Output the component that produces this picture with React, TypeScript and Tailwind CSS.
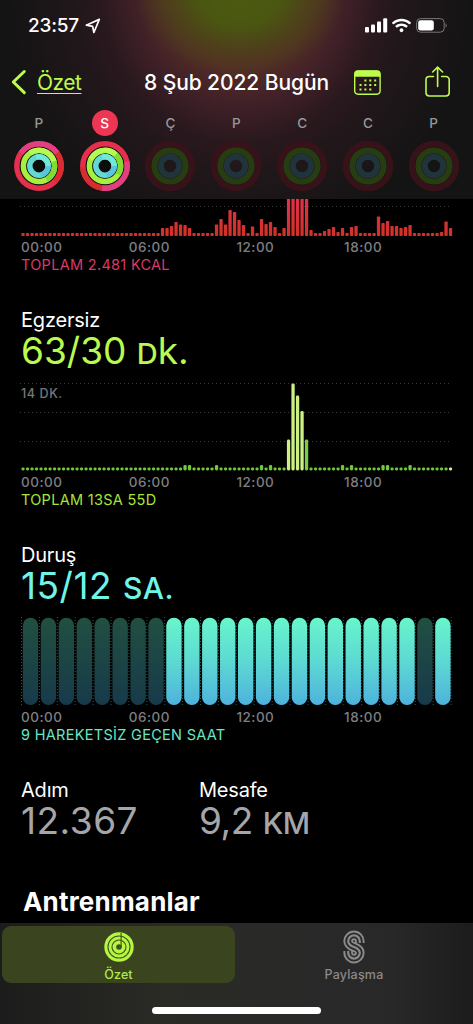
import { FaWifi } from "react-icons/fa";

const BAR_PITCH = 4.5;

// 15 minute buckets, heights in px
const ENERGY = [
  ...Array(31).fill(3),
  8, 8, 10, 14, 11.5, 11, 8, 3, 3, 3, 3, 3, 11.5, 17, 11.5, 26, 24, 16, 11, 3,
  9.5, 3, 17, 12, 14, 9, 3, 8, 42, 42, 42, 42, 42, 6, 3, 3, 5, 7, 9, 4, 8, 3, 9,
  10, 3, 3, 3, 3, 19.5, 13, 15, 10, 10, 8, 9, 11, 3, 3, 3, 3, 3, 3, 4, 14.5, 8,
];

const EXERCISE: Record<number, number> = {
  36: 5.5, 37: 5.5, 43: 5.5, 53: 5.5, 55: 5.5, 59: 31, 60: 87, 61: 75, 62: 59.5,
  63: 31, 71: 5.5, 73: 5.5, 80: 5.5, 81: 5.5, 86: 5.5,
};

const HOURS = ["00:00", "06:00", "12:00", "18:00"];

const DAYS = [
  { label: "P", rings: [0.15, 0.2, 0.25] },
  { label: "S", selected: true, rings: [0.52, 0.12, 0.25] },
  { label: "Ç" },
  { label: "P" },
  { label: "C" },
  { label: "C" },
  { label: "P" },
];

function Grid({ y }: { y: number }) {
  return (
    <line
      x1="20"
      x2="452"
      y1={y}
      y2={y}
      stroke="#383838"
      strokeWidth="1"
      strokeDasharray="1 3"
    />
  );
}

function HourLabels() {
  return (
    <div className="flex h-[17px] pl-[21px] text-[13.5px] font-medium leading-[17px] tracking-[0.5px] text-[#7e7e82]">
      {HOURS.map((h) => (
        <div key={h} className="w-[107.7px]">
          {h}
        </div>
      ))}
    </div>
  );
}

function EnergyChart() {
  return (
    <svg width="473" height="37" viewBox="0 0 473 37" className="block">
      <defs>
        <linearGradient id="move" gradientUnits="userSpaceOnUse" x1="0" y1="-20" x2="0" y2="37">
          <stop offset="0" stopColor="#e8335f" />
          <stop offset="1" stopColor="#d13127" />
        </linearGradient>
      </defs>
      <Grid y={7.5} />
      {ENERGY.map((h, i) => (
        <rect
          key={i}
          x={21.4 + i * BAR_PITCH}
          y={37 - h}
          width="3.3"
          height={h}
          rx="0.8"
          fill="url(#move)"
        />
      ))}
    </svg>
  );
}

function exerciseColor(i: number) {
  if (i === 95) return "#d9f58c";
  if (i >= 59 && i <= 62) return "#cdf084";
  if (i === 63) return "#77cf45";
  return "#72c83c";
}

function ExerciseChart() {
  return (
    <svg width="473" height="90" viewBox="0 0 473 90" className="block">
      <Grid y={2.5} />
      <Grid y={31.5} />
      <Grid y={60.5} />
      {Array.from({ length: 96 }, (_, i) => {
        const h = EXERCISE[i] ?? 3;
        return (
          <rect
            key={i}
            x={21.4 + i * BAR_PITCH}
            y={89.5 - h}
            width="3.3"
            height={h}
            rx="1.4"
            fill={exerciseColor(i)}
          />
        );
      })}
    </svg>
  );
}

function StandChart() {
  return (
    <svg width="473" height="90" viewBox="0 0 473 90" className="block">
      <defs>
        <linearGradient id="stood" x1="0" y1="0" x2="0" y2="1">
          <stop offset="0" stopColor="#68f5cb" />
          <stop offset="0.5" stopColor="#5dd9d3" />
          <stop offset="1" stopColor="#4eb2dc" />
        </linearGradient>
        <linearGradient id="idle" x1="0" y1="0" x2="0" y2="1">
          <stop offset="0" stopColor="#214f41" />
          <stop offset="1" stopColor="#173a4a" />
        </linearGradient>
      </defs>
      {Array.from({ length: 25 }, (_, i) => (
        <line
          key={i}
          x1={21.5 + i * 17.9}
          x2={21.5 + i * 17.9}
          y1="1"
          y2="89"
          stroke="#245b55"
          strokeWidth="1"
          strokeDasharray="1 2"
        />
      ))}
      {Array.from({ length: 24 }, (_, i) => (
        <rect
          key={i}
          x={22.8 + i * 17.93}
          y="1.8"
          width="15.4"
          height="87.3"
          rx="7.6"
          fill={i < 8 || i === 22 ? "url(#idle)" : "url(#stood)"}
        />
      ))}
    </svg>
  );
}

// point on a ring, t in turns clockwise from the top
function ringPoint(r: number, t: number) {
  const a = t * Math.PI * 2;
  return [26 + r * Math.sin(a), 26 - r * Math.cos(a)];
}

function Rings({ ends }: { ends?: number[] }) {
  if (!ends) {
    return (
      <svg width="52" height="52" viewBox="0 0 52 52">
        <circle cx="26" cy="26" r="22.2" fill="none" stroke="#371319" strokeWidth="6" />
        <circle cx="26" cy="26" r="15.6" fill="none" stroke="#283c12" strokeWidth="6" />
        <circle cx="26" cy="26" r="9.2" fill="none" stroke="#20343c" strokeWidth="6" />
      </svg>
    );
  }
  const radii = [22.2, 15.6, 9.2];
  const base = ["#e4304c", "#a5f03f", "#63d8d4"];
  const tint = ["#e23f83", "#b5fa50", "#71e9d6"];
  const past = ["#d92b30", "#80dc31", "#59c5df"];
  return (
    <svg width="52" height="52" viewBox="0 0 52 52">
      <circle cx="26" cy="26" r="25.2" fill="#0b0d0b" />
      {radii.map((r, i) => {
        const [sx, sy] = ringPoint(r, ends[i] - 0.3);
        const [x, y] = ringPoint(r, ends[i]);
        const [ex, ey] = ringPoint(r, ends[i] + 0.22);
        return (
          <g key={r} fill="none" strokeWidth="5.5">
            <circle cx="26" cy="26" r={r} stroke={base[i]} />
            <path d={`M${x} ${y}A${r} ${r} 0 0 1 ${ex} ${ey}`} stroke={past[i]} />
            <path d={`M${sx} ${sy}A${r} ${r} 0 0 1 ${x} ${y}`} stroke={tint[i]} />
          </g>
        );
      })}
    </svg>
  );
}

function StatusBar() {
  return (
    <div className="flex h-[53px] justify-between pl-[28px] pr-[25px] text-white">
      <div className="flex items-start gap-[6px] pt-[14px]">
        <span className="text-[19px] font-medium leading-6 tracking-[-0.2px]">23:57</span>
        <svg width="16" height="16" viewBox="0 0 16 16" className="mt-[4px]">
          <path
            d="M14.3 1.4 1.3 7.2 7.6 8.4 8.9 14.5Z"
            fill="none"
            stroke="white"
            strokeWidth="1.7"
            strokeLinejoin="round"
          />
        </svg>
      </div>
      <div className="flex items-start pt-[18px]">
        <svg width="23" height="15" viewBox="0 0 23 15" className="mr-[4px]">
          <rect x="0" y="9" width="4" height="5.4" rx="1" fill="white" />
          <rect x="6" y="6.5" width="4" height="7.9" rx="1" fill="white" />
          <rect x="12" y="3.4" width="4" height="11" rx="1" fill="white" />
          <rect x="18.2" y="0.3" width="4" height="14.1" rx="1" fill="white" />
        </svg>
        <FaWifi size={19} className="mt-[-2px]" />
        <svg width="32" height="16" viewBox="0 0 32 16" className="ml-[5px]">
          <rect x="0.6" y="0.6" width="27.6" height="13.6" rx="4" fill="none" stroke="#77777a" strokeWidth="1" />
          <rect x="2.2" y="2.2" width="15.6" height="10.4" rx="2.4" fill="white" />
          <path d="M29.6 5.2c1.4.8 1.4 3.6 0 4.4z" fill="#77777a" />
        </svg>
      </div>
    </div>
  );
}

function NavBar() {
  return (
    <div className="flex h-[57px] items-center">
      <svg width="16" height="26" viewBox="0 0 16 26" className="ml-[11px]">
        <path d="M13.3 2.5 2.3 13l11 10.7" fill="none" stroke="#bdfb4c" strokeWidth="3" strokeLinecap="round" strokeLinejoin="round" />
      </svg>
      <div className="ml-[10px] mt-[2px] w-[107px] text-[21px] leading-7 tracking-[-0.5px] text-[#bdfb4c] underline decoration-1 underline-offset-[3px]">
        Özet
      </div>
      <div className="mt-[2px] w-[210px] whitespace-nowrap text-[21px] font-medium leading-7 tracking-[-0.08px] text-white">
        8 Şub 2022 Bugün
      </div>
      <svg width="27" height="26" viewBox="0 0 27 26" className="mt-[2px]">
        <rect x="0.7" y="1" width="25.4" height="23.2" rx="3.4" fill="none" stroke="#bdfb4c" strokeWidth="1.4" />
        <path d="M.5 6.7V4a3.5 3.5 0 0 1 3.5-3.5h18.8A3.5 3.5 0 0 1 26.3 4v2.7z" fill="#bdfb4c" />
        <g fill="#bdfb4c">
          {[10.5, 15, 19.5].map((y, row) =>
            [5.5, 10.4, 15.3, 20.2].map((x, col) =>
              (row === 0 && col === 0) || (row === 2 && col === 3) ? null : (
                <rect key={`${x}-${y}`} x={x} y={y - 1} width="2" height="2" />
              ),
            ),
          )}
        </g>
      </svg>
      <svg width="26" height="32" viewBox="0 0 26 32" className="ml-[44px]" fill="none" stroke="#bdfb4c" strokeWidth="1.6" strokeLinecap="round" strokeLinejoin="round">
        <path d="M8.5 10.5H4.3A3.3 3.3 0 0 0 1 13.8v13A3.3 3.3 0 0 0 4.3 30h16.6a3.3 3.3 0 0 0 3.3-3.2v-13a3.3 3.3 0 0 0-3.3-3.3h-4.2" />
        <path d="M12.6 20.5V1.2M7.6 6l5-4.9 5 4.9" />
      </svg>
    </div>
  );
}

function Header() {
  return (
    <header className="h-[199px] shrink-0 bg-[#151415] bg-[radial-gradient(ellipse_105px_85px_at_240px_-8px,#4b5d0e_0%,#4a5611_40%,#4a561177_68%,transparent_100%),radial-gradient(ellipse_165px_185px_at_240px_-15px,#532e22_0%,#522b26_45%,#45222acc_65%,#321a2155_84%,transparent_100%),radial-gradient(ellipse_230px_240px_at_240px_0px,#3a1d24_0%,#25181c_60%,transparent_100%)]">
      <StatusBar />
      <NavBar />
      <div className="flex pl-[6px]">
        {DAYS.map((day, i) => (
          <div key={i} className="flex w-[65.8px] flex-col items-center">
            <div
              className={`flex size-[26px] items-center justify-center rounded-full text-[13.5px] font-medium ${
                day.selected ? "bg-[#ed3554] text-white" : "text-[#98989b]"
              }`}
            >
              {day.label}
            </div>
            <div className="mt-[4px]">
              <Rings ends={day.rings} />
            </div>
          </div>
        ))}
      </div>
    </header>
  );
}

function Total({ className, children }: { className: string; children: string }) {
  return (
    <div className={`h-[18px] pl-[21px] text-[14.5px] leading-[18px] tracking-[0.3px] ${className}`}>
      {children}
    </div>
  );
}

function SectionHead({
  title,
  value,
  unit,
  color,
}: {
  title: string;
  value: string;
  unit: React.ReactNode;
  color: string;
}) {
  return (
    <div className="h-[64px] pl-[21px]">
      <div className="h-[25px] text-[20px] leading-[27px] tracking-[-0.2px] text-white">{title}</div>
      <div className={`h-[37px] whitespace-nowrap text-[37px] leading-[37px] ${color}`}>
        {value}
        {unit}
      </div>
    </div>
  );
}

function TabBar() {
  return (
    <footer className="flex h-[101px] shrink-0 flex-col items-center bg-[#272727] bg-[linear-gradient(90deg,#1c1c1c_0%,#2a2b25_35%,#292929_65%,#282828_83%,#1c1c1c_100%)]">
      <div className="flex w-full pl-[2px] pt-[3px]">
        <div className="flex h-[57px] w-[233px] flex-col items-center rounded-[9px] bg-[#3a441f]">
          <svg width="30" height="30" viewBox="0 0 30 30" className="mt-[6px] shrink-0">
            <circle cx="15" cy="15" r="14.7" fill="#b6f541" />
            <g fill="none" stroke="#3d541b" strokeWidth="1.1">
              <circle cx="15" cy="15" r="11" />
              <circle cx="15" cy="15" r="7" />
              <path d="M17.1 1v14" />
            </g>
            <circle cx="15" cy="15" r="2.8" fill="#3d541b" />
          </svg>
          <div className="mt-[5px] text-[12.5px] font-medium leading-4 tracking-[0.1px] text-[#afe94a]">Özet</div>
        </div>
        <div className="flex h-[57px] w-[238px] flex-col items-center">
          <svg width="22" height="34" viewBox="0 0 22 34" className="mt-[4px] shrink-0" fill="none">
            {[
              ["#8b8b8b", 9.6],
              ["#2a2a2a", 5.8],
              ["#8b8b8b", 2.2],
            ].map(([stroke, w], i) => (
              <path
                key={i}
                d="M16.8 13V11.2A5.8 5.8 0 0 0 5.2 11.2C5.2 14.6 7.6 15.7 11 17S16.8 19.4 16.8 22.8A5.8 5.8 0 0 1 5.2 22.8V21"
                stroke={stroke}
                strokeWidth={w}
              />
            ))}
          </svg>
          <div className="mt-[3px] text-[12.5px] font-medium leading-4 tracking-[0.2px] text-[#8a8a8a]">Paylaşma</div>
        </div>
      </div>
      <div className="mt-[24px] h-[6.5px] w-[169px] rounded-full bg-white" />
    </footer>
  );
}

export default function App() {
  return (
    <div className="flex h-[1024px] w-[473px] flex-col overflow-hidden bg-black font-['Inter','Noto_Sans',sans-serif]">
      <Header />
      <main className="flex-1 overflow-hidden">
        <EnergyChart />
        <div className="pt-[3px]">
          <HourLabels />
          <Total className="text-[#d93a67]">TOPLAM 2.481 KCAL</Total>
        </div>

        <section className="pt-[33px]">
          <SectionHead
            title="Egzersiz"
            value="63/30 "
            color="text-[#b9fa50]"
            unit={
              <>
                <span className="text-[29px] font-medium">D</span>k.
              </>
            }
          />
          <div className="relative pt-[10px]">
            <ExerciseChart />
            <div className="absolute left-[21px] top-[15px] text-[12.5px] font-medium leading-4 tracking-[0.6px] text-[#77777b]">
              14 DK.
            </div>
          </div>
          <div className="pt-[3px]">
            <HourLabels />
            <Total className="text-[#a9e33c]">TOPLAM 13SA 55D</Total>
          </div>
        </section>

        <section className="pt-[33px]">
          <SectionHead
            title="Duruş"
            value="15/12 "
            color="text-[#6ff5e6] tracking-[0.5px]"
            unit={<span className="text-[30px] font-medium">SA.</span>}
          />
          <div className="pt-[10px]">
            <StandChart />
          </div>
          <div className="pt-[3px]">
            <HourLabels />
            <Total className="text-[#68e6c5]">9 HAREKETSİZ GEÇEN SAAT</Total>
          </div>
        </section>

        <section className="flex pt-[33px]">
          <div className="w-[178px]">
            <SectionHead title="Adım" value="12.367" unit="" color="text-[#a5a5aa] tracking-[0.5px]" />
          </div>
          <SectionHead
            title="Mesafe"
            value="9,2 "
            color="text-[#a5a5aa] tracking-[-0.5px]"
            unit={<span className="text-[30px] font-medium">KM</span>}
          />
        </section>

        <h2 className="pl-[23px] pt-[44px] text-[26px] font-bold leading-[34px] tracking-[0.2px] text-white">
          Antrenmanlar
        </h2>
      </main>
      <TabBar />
    </div>
  );
}
